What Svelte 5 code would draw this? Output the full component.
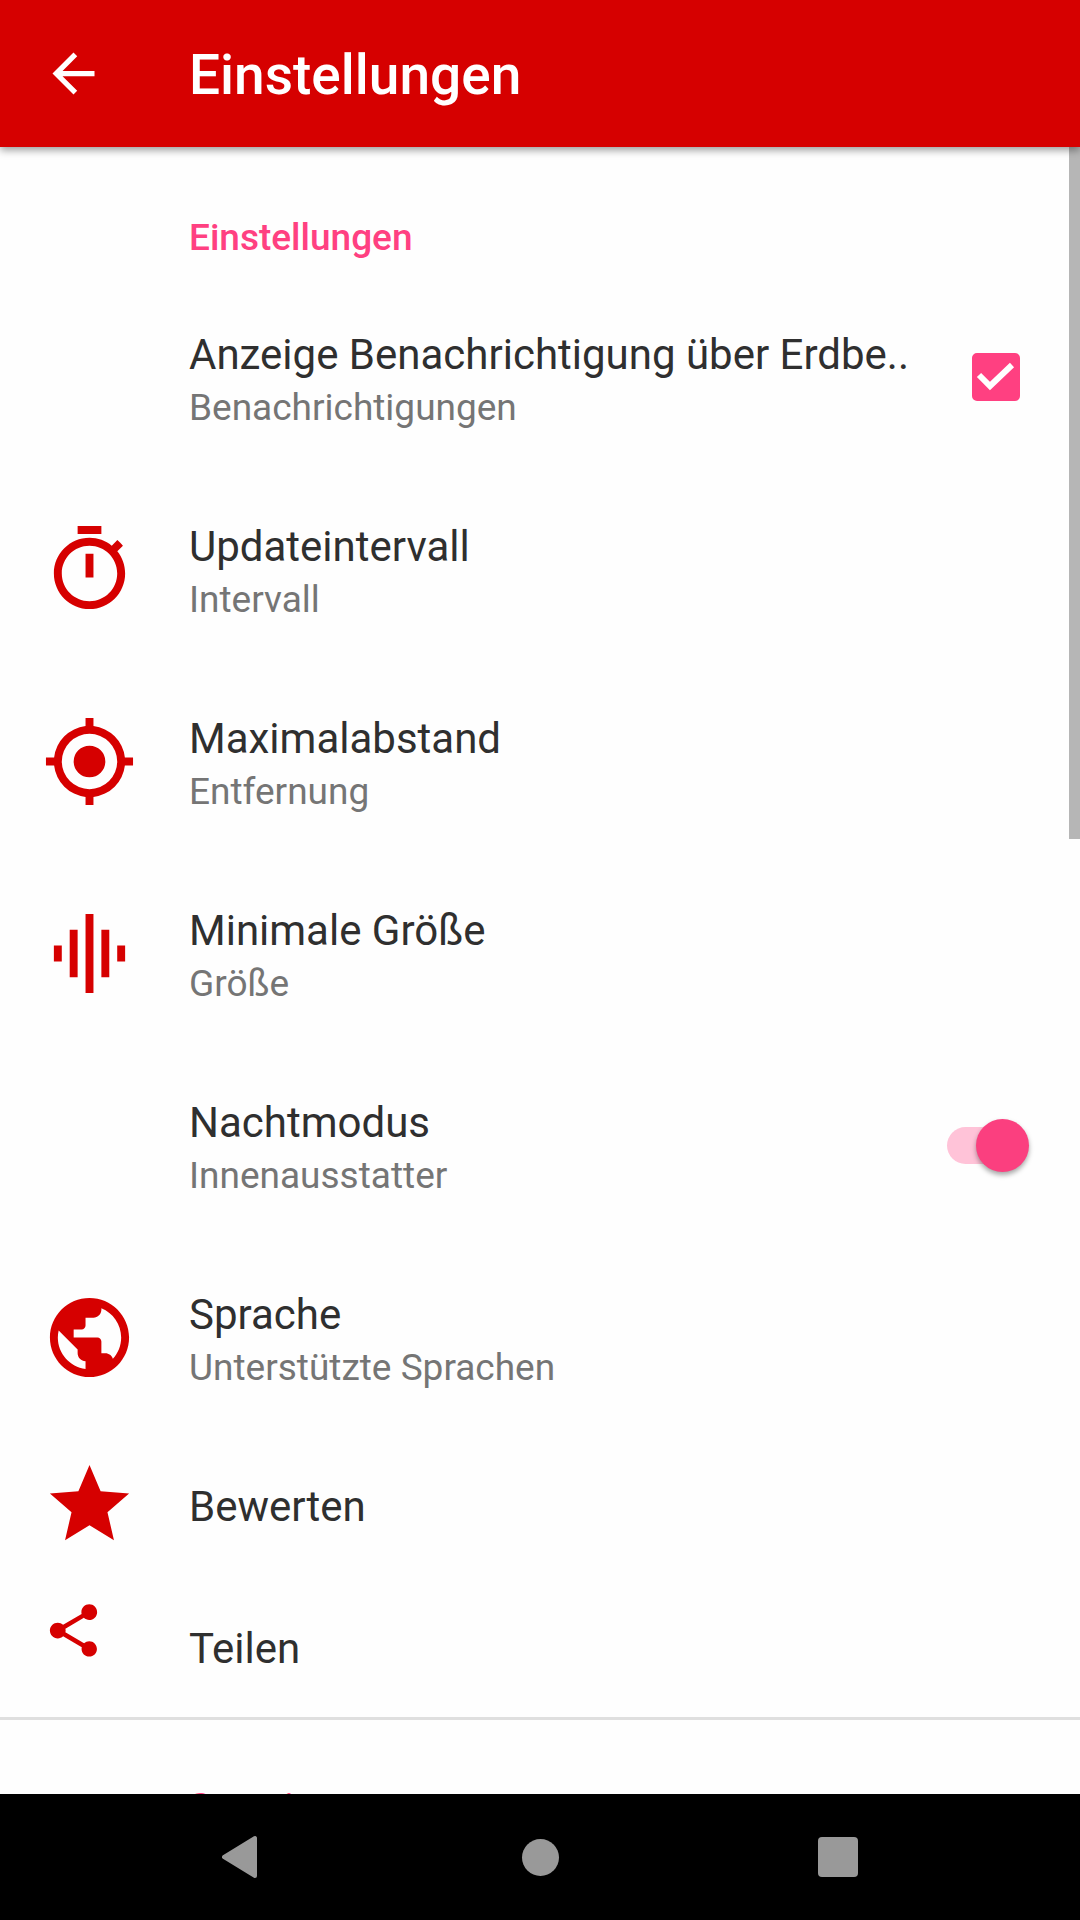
<script lang="ts">
    type Item = {
        title: string;
        summary?: string;
        icon?: string;
        small?: boolean;
        control?: "check" | "switch";
    };

    // 24x24 icon outlines
    const icons: Record<string, string> = {
        timer: "M15 1H9v2h6V1zm-4 13h2V8h-2v6zm8.030-6.610 1.420-1.420c-.43-.51-.9-.99-1.410-1.410l-1.420 1.420C16.070 4.740 14.120 4 12 4c-4.970 0-9 4.030-9 9s4.020 9 9 9 9-4.030 9-9c0-2.120-.74-4.070-1.970-5.610zM12 20c-3.870 0-7-3.130-7-7s3.130-7 7-7 7 3.130 7 7-3.130 7-7 7z",
        target: "M11 1h2v2.060A9 9 0 0 1 20.940 11H23v2h-2.060A9 9 0 0 1 13 20.940V23h-2v-2.060A9 9 0 0 1 3.060 13H1v-2h2.060A9 9 0 0 1 11 3.060zM12 5a7 7 0 1 0 0 14 7 7 0 0 0 0-14zm0 3a4 4 0 1 1 0 8 4 4 0 0 1 0-8z",
        bars: "M7 18h2V6H7v12zm4 4h2V2h-2v20zm-8-8h2v-4H3v4zm12 4h2V6h-2v12zm4-8v4h2v-4h-2z",
        globe: "M12 2C6.480 2 2 6.480 2 12s4.480 10 10 10 10-4.480 10-10S17.520 2 12 2zm-1 17.930c-3.950-.49-7-3.850-7-7.930 0-.62.08-1.210.21-1.790L9 15v1c0 1.100.9 2 2 2v1.930zm6.900-2.540c-.26-.81-1-1.390-1.900-1.390h-1v-3c0-.55-.45-1-1-1H8v-2h2c.55 0 1-.45 1-1V7h2c1.100 0 2-.9 2-2v-.41c2.930 1.190 5 4.060 5 7.410 0 2.080-.8 3.970-2.100 5.390z",
        star: "M12 17.270 18.180 21l-1.640-7.030L22 9.240l-7.190-.61L12 2 9.190 8.630 2 9.240l5.460 4.730L5.820 21z",
        share: "M18 16.080c-.76 0-1.440.3-1.960.77L8.910 12.700c.05-.23.09-.46.09-.7s-.04-.47-.09-.7l7.050-4.110c.54.5 1.250.81 2.040.81 1.660 0 3-1.340 3-3s-1.340-3-3-3-3 1.340-3 3c0 .24.04.47.09.7L8.040 9.810C7.500 9.310 6.790 9 6 9c-1.660 0-3 1.340-3 3s1.340 3 3 3c.79 0 1.500-.31 2.040-.81l7.120 4.160c-.05.21-.08.43-.08.65 0 1.610 1.310 2.920 2.920 2.920s2.920-1.310 2.920-2.920-1.310-2.920-2.920-2.920z",
    };

    const items: Item[] = [
        {
            title: "Anzeige Benachrichtigung über Erdbe..",
            summary: "Benachrichtigungen",
            control: "check",
        },
        { title: "Updateintervall", summary: "Intervall", icon: "timer" },
        { title: "Maximalabstand", summary: "Entfernung", icon: "target" },
        { title: "Minimale Größe", summary: "Größe", icon: "bars" },
        {
            title: "Nachtmodus",
            summary: "Innenausstatter",
            control: "switch",
        },
        { title: "Sprache", summary: "Unterstützte Sprachen", icon: "globe" },
        { title: "Bewerten", icon: "star" },
        { title: "Teilen", icon: "share", small: true },
    ];

    let values = $state({ check: true, switch: true });
</script>

{#snippet content(item: Item)}
    <span class="icon">
        {#if item.icon}
            <svg class:small={item.small} viewBox="0 0 24 24" aria-hidden="true">
                <path d={icons[item.icon]} />
            </svg>
        {/if}
    </span>
    <span class="text">
        <span class="title">{item.title}</span>
        {#if item.summary}
            <span class="summary">{item.summary}</span>
        {/if}
    </span>
{/snippet}

<div class="screen">
    <header>
        <button class="back" aria-label="Zurück">
            <svg viewBox="0 0 24 24" aria-hidden="true">
                <path
                    d="M20 11H7.830l5.590-5.590L12 4l-8 8 8 8 1.410-1.410L7.830 13H20v-2z"
                />
            </svg>
        </button>
        <h1>Einstellungen</h1>
    </header>

    <main>
        <section>
            <h2>Einstellungen</h2>
            {#each items as item}
                {#if item.control}
                    <label class="row">
                        {@render content(item)}
                        <span class="widget">
                            <input
                                type="checkbox"
                                class={item.control}
                                bind:checked={values[item.control]}
                            />
                            {#if item.control === "check" && values.check}
                                <svg
                                    class="tick"
                                    viewBox="0 0 48 48"
                                    aria-hidden="true"
                                >
                                    <path d="M7 22 18 33 40 12" />
                                </svg>
                            {/if}
                        </span>
                    </label>
                {:else}
                    <button class="row" class:single={!item.summary}>
                        {@render content(item)}
                    </button>
                {/if}
            {/each}
        </section>
        <section class="next">
            <h2>Sonstiges</h2>
        </section>
        <div class="scrollbar"></div>
    </main>

    <nav>
        <button aria-label="Zurück">
            <svg viewBox="0 0 40 44" aria-hidden="true">
                <path d="M2 22 33 3v38z" />
            </svg>
        </button>
        <button aria-label="Startseite"><span class="home"></span></button>
        <button aria-label="Übersicht"><span class="recent"></span></button>
    </nav>
</div>

<style>
    :global(body) {
        margin: 0;
        font-family: Roboto, "Liberation Sans", sans-serif;
        background: #fefefe;
    }

    .screen {
        display: flex;
        flex-direction: column;
        height: 100vh;
        overflow: hidden;
    }

    button {
        border: none;
        padding: 0;
        background: none;
        font: inherit;
        cursor: pointer;
    }

    header {
        position: relative;
        z-index: 1;
        display: flex;
        align-items: center;
        height: 147px;
        flex: none;
        background: #d60000;
        color: #fff;
        box-shadow: 0 3px 8px rgba(0, 0, 0, 0.4);
    }

    .back {
        display: flex;
        width: 189px;
        padding-left: 42px;
    }

    .back svg {
        width: 63px;
        height: 63px;
        fill: #fff;
    }

    h1 {
        margin: 0;
        padding-top: 2px;
        font-size: 55px;
        line-height: 64px;
        font-weight: 500;
    }

    main {
        position: relative;
        flex: 1;
        min-height: 0;
        overflow: hidden;
    }

    h2 {
        margin: 0;
        padding: 69px 42px 22px 189px;
        font-size: 37px;
        line-height: 43px;
        font-weight: 500;
        color: #ff4081;
    }

    .row {
        display: flex;
        align-items: center;
        box-sizing: border-box;
        width: 100%;
        height: 192px;
        padding: 0 42px;
        text-align: left;
        cursor: pointer;
    }

    .row.single {
        height: 142px;
    }

    .icon {
        width: 147px;
        height: 95px;
        flex: none;
    }

    .icon svg {
        display: block;
        width: 95px;
        height: 95px;
        fill: #d60000;
    }

    .icon svg.small {
        width: 63px;
        height: 63px;
    }

    .text {
        display: flex;
        flex: 1;
        flex-direction: column;
        min-width: 0;
        padding-top: 6px;
    }

    .title {
        overflow: hidden;
        font-size: 42px;
        line-height: 56px;
        color: #2f2f2f;
        white-space: nowrap;
    }

    .summary {
        font-size: 37px;
        line-height: 50px;
        color: #757575;
    }

    .widget {
        position: relative;
        display: flex;
        flex: none;
    }

    input {
        appearance: none;
        margin: 0;
        cursor: pointer;
    }

    .check {
        width: 48px;
        height: 48px;
        margin-right: 18px;
        border: 5px solid #757575;
        border-radius: 5px;
    }

    .check:checked {
        border-color: #ff4081;
        background: #ff4081;
    }

    .tick {
        position: absolute;
        top: 0;
        left: 0;
        width: 48px;
        height: 48px;
        fill: none;
        stroke: #fff;
        stroke-width: 6;
        pointer-events: none;
    }

    .switch {
        position: relative;
        width: 73px;
        height: 37px;
        margin-right: 18px;
        border-radius: 19px;
        background: #b9b9b9;
    }

    .switch::after {
        content: "";
        position: absolute;
        top: -8px;
        left: -8px;
        width: 53px;
        height: 53px;
        border-radius: 50%;
        background: #f1f1f1;
        box-shadow: 0 3px 5px rgba(0, 0, 0, 0.35);
    }

    .switch:checked {
        background: #ffc3d8;
    }

    .switch:checked::after {
        left: auto;
        right: -9px;
        background: #fb3f7f;
    }

    .next {
        border-top: 3px solid #dfdfdf;
    }

    .next h2 {
        padding-top: 65px;
    }

    .scrollbar {
        position: absolute;
        top: 0;
        right: 0;
        width: 11px;
        height: 42%;
        background: #b6b6b6;
    }

    nav {
        display: flex;
        flex: none;
        justify-content: center;
        gap: 172px;
        height: 126px;
        background: #000;
    }

    nav button {
        display: flex;
        align-items: center;
        justify-content: center;
        width: 126px;
    }

    nav svg {
        width: 40px;
        height: 44px;
        fill: #999;
        stroke: #999;
        stroke-width: 4;
        stroke-linejoin: round;
    }

    .home {
        width: 37px;
        height: 37px;
        border-radius: 50%;
        background: #999;
    }

    .recent {
        width: 40px;
        height: 40px;
        border-radius: 4px;
        background: #999;
    }
</style>
